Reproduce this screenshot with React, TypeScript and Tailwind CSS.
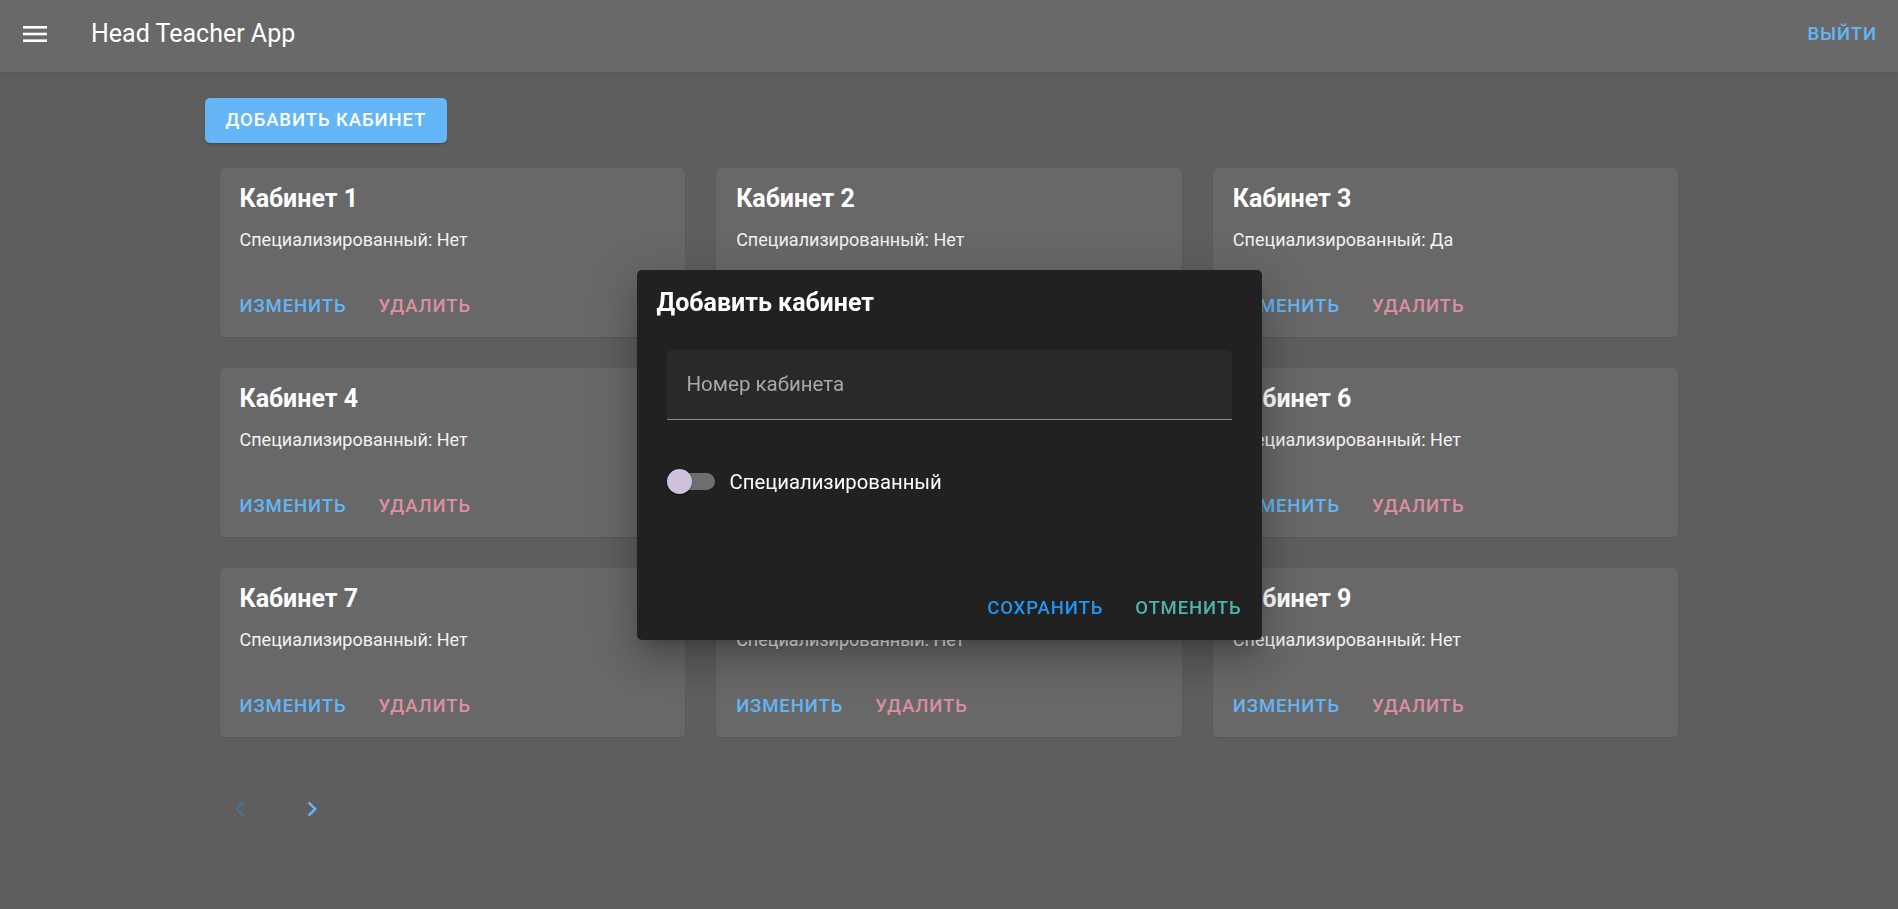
import React from "react";

const rooms = [
  { n: 1, s: false },
  { n: 2, s: false },
  { n: 3, s: true },
  { n: 4, s: false },
  { n: 5, s: false },
  { n: 6, s: false },
  { n: 7, s: false },
  { n: 8, s: false },
  { n: 9, s: false },
];

function Card({ n, s }: { n: number; s: boolean }) {
  return (
    <div className="h-[169px] rounded-[5px] bg-[#686868] px-[20px] pt-[16px] shadow-[0_1px_2px_0_rgba(0,0,0,0.06)]">
      <div className="text-[25px] leading-[30px] font-bold text-white">Кабинет {n}</div>
      <div className="mt-[14px] text-[18px] leading-[24px] text-[#f2f2f2]">
        Специализированный: {s ? "Да" : "Нет"}
      </div>
      <div className="mt-[34px] -ml-[10px] flex items-center">
        <button className="px-[10px] py-[8px] text-[18.5px] leading-[24px] font-medium tracking-[0.9px] text-[#64b5f6]">
          ИЗМЕНИТЬ
        </button>
        <button className="ml-[12px] px-[10px] py-[8px] text-[18.5px] leading-[24px] font-medium tracking-[0.9px] text-[#dc8fa0]">
          УДАЛИТЬ
        </button>
      </div>
    </div>
  );
}

export default function App() {
  return (
    <div className="relative min-h-screen bg-[#5e5e5e] font-['Roboto','Liberation_Sans',sans-serif]">
      <header className="flex h-[72px] items-center bg-[#696969] pb-[4px] shadow-[0_1px_3px_0_rgba(0,0,0,0.08)]">
        <svg className="ml-[23px] h-[16px] w-[24px]" viewBox="0 0 24 16" fill="#ffffff">
          <rect x="0" y="0" width="24" height="2.6" />
          <rect x="0" y="6.7" width="24" height="2.6" />
          <rect x="0" y="13.4" width="24" height="2.6" />
        </svg>
        <div className="ml-[44px] text-[25px] leading-[30px] text-white">Head Teacher App</div>
        <button className="ml-auto mr-[21px] text-[18.5px] leading-[24px] font-medium tracking-[0.9px] text-[#64b5f6]">
          ВЫЙТИ
        </button>
      </header>

      <main className="mx-auto w-[1489px] pt-[26px]">
        <button className="h-[45px] rounded-[5px] bg-[#64b6f7] px-[21px] text-[18.5px] font-medium tracking-[0.9px] text-white shadow-[0_2px_2px_-1px_rgba(0,0,0,0.15),0_1px_3px_0_rgba(0,0,0,0.1)]">
          ДОБАВИТЬ КАБИНЕТ
        </button>

        <div className="mt-[25px] grid grid-cols-3 gap-[31px] px-[15px]">
          {rooms.map((r) => (
            <Card key={r.n} n={r.n} s={r.s} />
          ))}
        </div>

        <div className="mt-[42px] flex items-center pl-[5px]">
          <div className="flex h-[60px] w-[60px] items-center justify-center">
            <svg width="30" height="30" viewBox="0 0 24 24" fill="#4f6f8c">
              <path d="M15.41 7.41 14 6l-6 6 6 6 1.41-1.41L10.83 12z" />
            </svg>
          </div>
          <div className="ml-[12px] flex h-[60px] w-[60px] items-center justify-center">
            <svg width="30" height="30" viewBox="0 0 24 24" fill="#64b5f6">
              <path d="M10 6 8.59 7.41 13.17 12l-4.58 4.59L10 18l6-6z" />
            </svg>
          </div>
        </div>
      </main>

      <div className="fixed inset-0 flex items-center justify-center">
        <div className="flex h-[370px] w-[625px] flex-col rounded-[5px] bg-[#212121] shadow-[0_11px_15px_-7px_rgba(0,0,0,0.2),0_24px_38px_3px_rgba(0,0,0,0.14),0_9px_46px_8px_rgba(0,0,0,0.12)]">
          <div className="px-[20px] pt-[18px] text-[25px] leading-[30px] font-bold text-white">
            Добавить кабинет
          </div>
          <div className="mx-[30px] mt-[32px] flex h-[70px] items-center rounded-t-[5px] border-b border-[#8c8c8c] bg-[#292929] px-[20px]">
            <span className="text-[20.5px] leading-[24px] text-[#a8a8a8]">Номер кабинета</span>
          </div>
          <div className="mx-[30px] mt-[42px] flex h-[40px] items-center">
            <div className="relative h-[25px] w-[48px]">
              <div className="absolute left-[5px] top-[4px] h-[17px] w-[43px] rounded-full bg-[#6e6e6e]" />
              <div className="absolute left-0 top-0 h-[25px] w-[25px] rounded-full bg-[#d0c2dd] shadow-[0_2px_1px_-1px_rgba(0,0,0,0.2),0_1px_1px_0_rgba(0,0,0,0.14),0_1px_3px_0_rgba(0,0,0,0.12)]" />
            </div>
            <span className="ml-[15px] text-[20.3px] leading-[24px] text-white">Специализированный</span>
          </div>
          <div className="mt-auto flex justify-end pb-[12px] pr-[10px]">
            <button className="px-[10px] py-[8px] text-[18.5px] leading-[24px] font-medium tracking-[0.9px] text-[#2196f3]">
              СОХРАНИТЬ
            </button>
            <button className="ml-[12px] px-[10px] py-[8px] text-[18.5px] leading-[24px] font-medium tracking-[0.9px] text-[#4db6ac]">
              ОТМЕНИТЬ
            </button>
          </div>
        </div>
      </div>
    </div>
  );
}
